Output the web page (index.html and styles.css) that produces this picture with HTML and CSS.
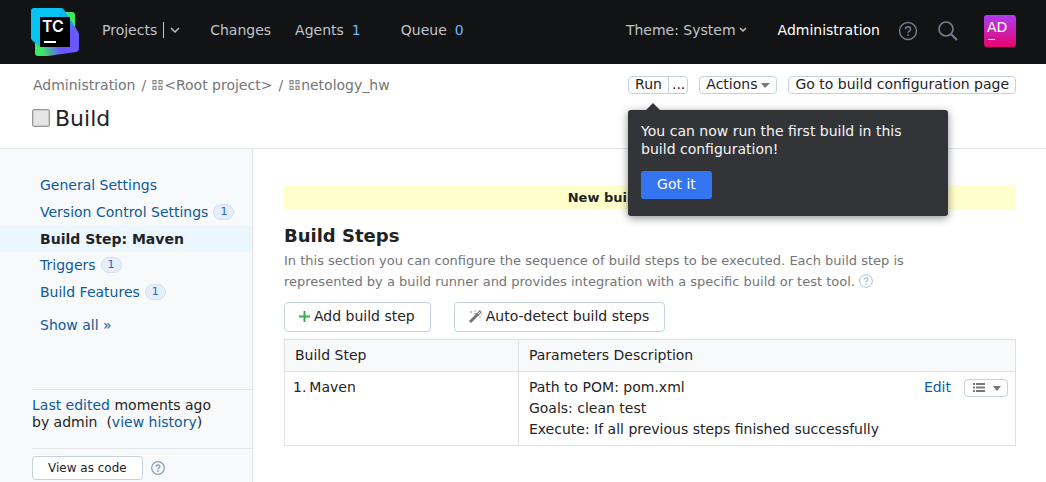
FILE: index.html
```html
<!DOCTYPE html>
<html lang="en">
<head>
<meta charset="utf-8">
<title>Build — TeamCity</title>
<link rel="stylesheet" href="styles.css">
</head>
<body>
<header class="topbar">
  <a class="logo" href="#" aria-label="TeamCity">
    <svg width="48" height="48" viewBox="0 0 48 48">
      <defs>
        <linearGradient id="lg-bottom" x1="5" y1="44" x2="30" y2="36" gradientUnits="userSpaceOnUse"><stop offset=".2" stop-color="#3bea62"/><stop offset=".9" stop-color="#6b57ff"/></linearGradient>
        <linearGradient id="lg-side" x1="31" y1="10" x2="44" y2="22" gradientUnits="userSpaceOnUse"><stop offset="0" stop-color="#07b8f2"/><stop offset="1" stop-color="#6b57ff"/></linearGradient>
      </defs>
      <path d="M32 4h9q3 0 3 3v14H32z" fill="#3bea62"/>
      <path d="M4 30v15q0 3 3 3h10l28-4q3-1 3-4V27l-8-12z" fill="url(#lg-bottom)"/>
      <path d="M3 0h27q2 0 3 2l14 22q1 2 1 4v10L30 34 9 39 2 33q-2-1-2-3V3q0-3 3-3z" fill="#07c3f2"/>
      <path d="M31 1q1 0 2 1l14 22q1 2 1 4v12L28 38V8z" fill="url(#lg-side)"/>
      <path d="M9 9h30v30H9z" fill="#000"/>
      <text class="logo-text" x="11" y="24">TC</text>
      <path d="M13 33h12v2H13z" fill="#fff"/>
    </svg>
  </a>
  <nav class="main-nav">
    <div class="projects"><a href="#">Projects</a>
      <button class="nav-toggle" aria-label="Show projects"><svg width="10" height="6" viewBox="0 0 10 6"><path d="M1 1l4 4 4-4" fill="none" stroke="#c1c4ca" stroke-width="1.4"/></svg></button>
    </div>
    <a href="#">Changes</a>
    <a class="counted" href="#">Agents <span class="count">1</span></a>
    <a class="counted" href="#">Queue <span class="count">0</span></a>
  </nav>
  <div class="tools">
    <button class="theme">Theme: System<svg width="8" height="6" viewBox="0 0 8 6"><path d="M1 1l3 3 3-3" fill="none" stroke="#c1c4ca" stroke-width="1.5"/></svg></button>
    <a class="admin" href="#">Administration</a>
    <button class="icon-btn" aria-label="Help"><svg width="20" height="20" viewBox="0 0 20 20" fill="none" stroke="#737b8c" stroke-width="1.5"><circle cx="10" cy="10" r="8.5"/><path d="M7.5 8.2c0-3.4 5-3.4 5 0 0 1.8-2.5 1.8-2.5 3.8M10 13.2v1.8"/></svg></button>
    <button class="icon-btn search" aria-label="Search"><svg width="20" height="20" viewBox="0 0 20 20" fill="none" stroke="#737b8c"><circle cx="8" cy="8" r="7" stroke-width="1.7"/><path d="M13 13l6 6" stroke-width="2.2"/></svg></button>
    <button class="avatar" aria-label="admin"><span>AD</span></button>
  </div>
</header>

<section class="page-head">
  <div class="crumb-row">
    <nav class="crumbs" aria-label="Breadcrumb">
      <a href="#">Administration</a><span>/</span>
      <a href="#"><svg width="11" height="10" viewBox="0 0 11 10" fill="none" stroke="#8c8c8c" stroke-width="1.2"><path d="M1 .6h3v3H1zM7 .6h3v3H7zM1 6.400h3v3H1zM7 6.400h3v3H7z"/></svg>&lt;Root project&gt;</a><span>/</span>
      <a href="#"><svg width="11" height="10" viewBox="0 0 11 10" fill="none" stroke="#8c8c8c" stroke-width="1.2"><path d="M1 .6h3v3H1zM7 .6h3v3H7zM1 6.400h3v3H1zM7 6.400h3v3H7z"/></svg>netology_hw</a>
    </nav>
    <div class="actions">
      <div class="run-group">
        <button class="btn small run">Run</button><button class="btn small more" aria-label="Custom run">...</button>
        <div class="popup" role="dialog" aria-label="First build hint">
          <p>You can now run the first build in this build configuration!</p>
          <button class="got-it">Got it</button>
        </div>
      </div>
      <button class="btn small">Actions<i class="caret"></i></button>
      <button class="btn small">Go to build configuration page</button>
    </div>
  </div>
  <div class="title-row"><i class="status-icon"></i><h1>Build</h1></div>
</section>

<div class="layout">
  <aside class="sidebar">
    <ul class="menu">
      <li><a href="#">General Settings</a></li>
      <li><a href="#">Version Control Settings</a><span class="badge">1</span></li>
      <li class="active">Build Step: Maven</li>
      <li><a href="#">Triggers</a><span class="badge">1</span></li>
      <li><a href="#">Build Features</a><span class="badge">1</span></li>
      <li class="show-all"><a href="#">Show all »</a></li>
    </ul>
    <div class="edited"><a href="#">Last edited</a> moments ago<br>by admin&nbsp; (<a href="#">view history</a>)</div>
    <div class="code-row">
      <button class="btn view-code">View as code</button>
      <a class="help" href="#" aria-label="Help"><svg width="14" height="14" viewBox="0 0 14 14" fill="none" stroke="#8b9ebd" stroke-width="1.3"><circle cx="7" cy="7" r="6.3"/><path d="M5.2 5.8c0-2.5 3.6-2.5 3.6 0C8.8 7 7 7 7 8.5M7 9.4v1.5" stroke-width="1.5"/></svg></a>
    </div>
  </aside>

  <main class="content">
    <div class="notice">New build step added.</div>
    <h2>Build Steps</h2>
    <p class="description">In this section you can configure the sequence of build steps to be executed. Each build step is represented by a build runner and provides integration with a specific build or test tool. <a class="help" href="#" aria-label="Help"><svg width="14" height="14" viewBox="0 0 14 14" fill="none" stroke="#a3bfdc" stroke-width="1"><circle cx="7" cy="7" r="6.3"/><path d="M5.2 5.8c0-2.5 3.6-2.5 3.6 0C8.8 7 7 7 7 8.5M7 9.4v1.5" stroke-width="1.2"/></svg></a></p>
    <div class="step-buttons">
      <button class="btn large"><svg width="11" height="11" viewBox="0 0 11 11"><path d="M5.5 0v11M0 5.5h11" stroke="#3dac56" stroke-width="2"/></svg>Add build step</button>
      <button class="btn large"><svg width="13" height="13" viewBox="0 0 13 13"><path d="M1 12l8-8" stroke="#777" stroke-width="3"/><path d="M8 5l4-4" stroke="#777" stroke-width="3"/><path d="M9 4l2.500-2.500" stroke="#fff" stroke-width="1"/><path d="M2 1v2M1 2h2M6 0v2M5 3.500h2M11 6v2M12 4.500h1" stroke="#aaa" stroke-width="1"/></svg>Auto-detect build steps</button>
    </div>
    <table class="steps">
      <thead><tr><th class="step-col">Build Step</th><th colspan="2">Parameters Description</th></tr></thead>
      <tbody><tr>
        <td class="name">1.<span>Maven</span></td>
        <td class="params">Path to POM: pom.xml<br>Goals: clean test<br>Execute: If all previous steps finished successfully</td>
        <td class="row-actions"><div><a href="#">Edit</a><button class="btn small list-btn" aria-label="Step actions"><svg width="12" height="9" viewBox="0 0 12 9" fill="#777"><path d="M0 0h2v2H0zM3 0h9v2H3zM0 3.500h2v2H0zM3 3.500h9v2H3zM0 7h2v2H0zM3 7h9v2H3z"/></svg><i class="caret"></i></button></div></td>
      </tr></tbody>
    </table>
  </main>
</div>
</body>
</html>
```
FILE: styles.css
```css
* { box-sizing: border-box; }
body {
  margin: 0;
  min-height: 100vh;
  display: flex;
  flex-direction: column;
  font: 14px/18px "DejaVu Sans", sans-serif;
  color: #1f2326;
  background: #fff;
}
a { color: #0e5a9c; text-decoration: none; }
button { font: inherit; color: inherit; cursor: pointer; }
svg { display: block; flex: none; }
h1, h2, p, ul { margin: 0; padding: 0; }

.topbar {
  display: flex;
  align-items: center;
  height: 64px;
  padding: 0 30px 0 31px;
  background: #121314;
}
.logo { margin-right: 23px; }
.logo-text { font: 600 16px Inter, sans-serif; fill: #fff; }
.main-nav, .tools, .projects { display: flex; align-items: center; }
.main-nav, .tools { padding-bottom: 4px; }
.main-nav a { color: #c1c4ca; }
.main-nav { gap: 24px; }
.projects { margin-right: 6px; }
.nav-toggle {
  height: 16px;
  margin-left: 6px;
  padding: 0 0 0 6px;
  border: 0;
  border-left: 1px solid #c1c4ca;
  background: none;
}
.counted { display: flex; gap: 8px; margin-right: 16px; }
.count { color: #6db3ff; }
.tools { margin-left: auto; }
.theme {
  display: flex;
  align-items: center;
  gap: 3px;
  padding: 0;
  border: 0;
  background: none;
  color: #c1c4ca;
}
.tools .admin { margin-left: 31px; color: #fff; }
.icon-btn { margin-left: 18px; padding: 2px 0 0; border: 0; background: none; }
.icon-btn.search { margin-left: 20px; }
.avatar {
  width: 32px;
  height: 32px;
  margin: 2px 0 0 26px;
  padding: 4px 3px;
  border: 0;
  border-radius: 3px;
  background: linear-gradient(#af3bef, #e9046f);
  color: #fff;
  font-size: 14px;
  line-height: 16px;
  text-align: left;
}
.avatar span { display: block; }
.avatar::after { content: ""; display: block; width: 7px; height: 1px; margin: 4px 0 3px 1px; background: #fff; }

.page-head { height: 85px; padding: 12px 30px 0 33px; border-bottom: 1px solid #dfe5eb; }
.crumb-row { display: flex; justify-content: space-between; align-items: flex-start; }
.crumbs { display: flex; gap: 6px; color: #737577; }
.crumbs a { display: flex; align-items: center; gap: 1px; color: #737577; }
.actions { display: flex; gap: 11px; }
.run-group { position: relative; display: flex; }
.btn {
  display: flex;
  align-items: center;
  justify-content: center;
  border: 1px solid #c3d2de;
  border-radius: 4px;
  background: #fff;
  white-space: nowrap;
}
.btn.small { height: 18px; padding: 0 6px 2px; line-height: 16px; }
.btn.run { border-radius: 4px 0 0 4px; }
.btn.more { margin-left: -1px; padding: 0 2px 2px 3px; border-radius: 0 4px 4px 0; }
.caret { margin: 2px 0 0 4px; border: 4px solid transparent; border-top: 5px solid #737577; border-bottom: 0; }
.actions .caret { border-width: 5px 5px 0 4px; }
.popup {
  position: absolute;
  z-index: 2;
  top: 34px;
  left: 0;
  width: 320px;
  padding: 12px 13px 17px;
  border-radius: 3px;
  background: #333438;
  color: #f5f5f5;
  box-shadow: 0 2px 8px rgba(0, 0, 0, .45);
}
.popup::before {
  content: "";
  position: absolute;
  top: -7px;
  left: 18px;
  border: 7px solid transparent;
  border-top: 0;
  border-bottom-color: #333438;
}
.got-it {
  display: block;
  height: 28px;
  margin-top: 13px;
  padding: 0 16px 2px;
  border: 0;
  border-radius: 3px;
  background: #3574f0;
  color: #fff;
}
.title-row { display: flex; align-items: center; gap: 5px; margin: 12px 0 0 -1px; }
.status-icon { width: 18px; height: 18px; margin-bottom: 3px; border: 1px solid #999; border-radius: 2px; background: #e6e6e6; box-shadow: inset 0 0 0 1px #ccc; }
h1 { font-size: 22px; line-height: 26px; font-weight: 400; }

.layout { display: flex; flex: 1; }
.sidebar { flex: none; width: 253px; padding-top: 23px; border-right: 1px solid #dfe5eb; background: #f7f9fb; }
.menu { list-style: none; }
.menu li { display: flex; align-items: center; gap: 5px; height: 27px; padding: 0 0 2px 40px; }
.menu .active { height: 26px; padding-bottom: 0; background: #ebf6ff; font-weight: 700; }
.menu .show-all { margin-top: 6px; }
.badge {
  height: 16px;
  padding: 0 6px;
  border: 1px solid #d3dff5;
  border-radius: 8px;
  background: #e6eef9;
  color: #2468c8;
  font-size: 11px;
  line-height: 14px;
}
.edited { margin: 50px 0 0 32px; padding: 7px 0 17px; border-top: 1px solid #dfe5eb; line-height: 17px; }
.code-row { display: flex; align-items: center; gap: 8px; margin-left: 32px; padding: 7px 0 2px; border-top: 1px solid #dfe5eb; }
.view-code { height: 24px; padding: 0 15px; font-size: 12px; line-height: 16px; }

.content { flex: 1; min-width: 0; padding: 36px 30px 20px 31px; }
.notice { background: #ffffcc; font-size: 13px; line-height: 25px; font-weight: 700; text-align: center; }
h2 { margin-top: 14px; font-size: 18px; line-height: 24px; }
.description { max-width: 620px; margin-top: 2px; color: #737577; font-size: 13px; line-height: 21px; }
.description .help { display: inline-block; vertical-align: -2px; }
.step-buttons { display: flex; gap: 23px; margin: 10px 0 7px; }
.btn.large { gap: 4px; height: 30px; padding: 0 15px 2px 14px; }
.btn.large svg { margin-top: 1px; }
.steps { width: 100%; border-collapse: collapse; border: 1px solid #dfe1e5; line-height: 21px; }
.steps th { padding: 5px 10px; border: 1px solid #dfe1e5; background: #f7f9fb; font-weight: 400; text-align: left; }
.steps td { padding: 5px 10px; vertical-align: top; }
.step-col { width: 32%; }
.steps .name { padding-left: 8px; border-right: 1px solid #dfe1e5; }
.name span { margin-left: 3px; }
.steps .row-actions { width: 92px; padding: 5px 7px 5px 0; }
.row-actions div { display: flex; align-items: center; justify-content: flex-end; gap: 13px; }
.btn.list-btn { padding: 0 6px 0 8px; }
.list-btn .caret { margin: 1px 0 0 8px; }
```
